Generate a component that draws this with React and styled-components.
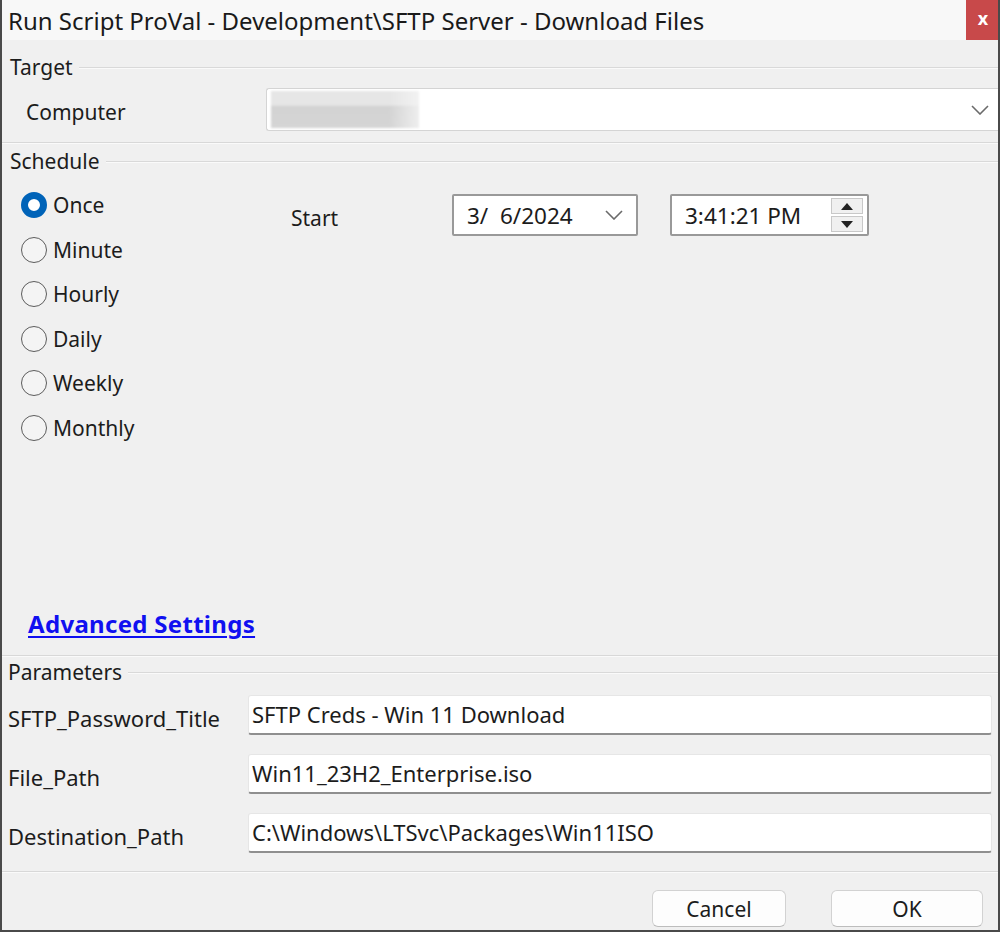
import React from 'react';
import styled, { createGlobalStyle } from 'styled-components';

const GlobalStyle = createGlobalStyle`
	html, body {
		margin: 0;
		padding: 0;
		background: #f0f0f0;
	}
	* {
		box-sizing: border-box;
	}
`;

const Window = styled.div`
	width: 1000px;
	height: 932px;
	display: flex;
	flex-direction: column;
	background: #f0f0f0;
	border-left: 2px solid #4a4a4a;
	border-right: 2px solid #4a4a4a;
	border-bottom: 2px solid #4a4a4a;
	font-family: "Noto Sans", "Open Sans", sans-serif;
	font-size: 21px;
	color: #1c1c1c;
	overflow: hidden;
`;

const TitleBar = styled.div`
	height: 40px;
	flex: none;
	display: flex;
	align-items: center;
	justify-content: space-between;
	background: #f8f8f8;
`;

const Title = styled.div`
	padding-left: 6px;
	font-size: 24px;
	color: #1a1a1a;
`;

const CloseButton = styled.div`
	width: 34px;
	height: 40px;
	margin-right: -2px;
	background: #c8494a;
	color: #fff;
	font-weight: bold;
	font-size: 18px;
	display: flex;
	align-items: center;
	justify-content: center;
	padding-bottom: 4px;
`;

const GroupHeader = styled.div`
	display: flex;
	align-items: center;
	height: 22px;
	margin-top: ${ ( { top } ) => top }px;
	padding-left: ${ ( { left } ) => left }px;
`;

const GroupLabel = styled.span`
	padding-right: 6px;
	line-height: 22px;
`;

const GroupLine = styled.div`
	flex: 1;
	height: 2px;
	border-top: 1px solid #d9d9d9;
	border-bottom: 1px solid #fafafa;
	margin-top: 2px;
`;

const Separator = styled.div`
	height: 2px;
	flex: none;
	margin-top: ${ ( { top } ) => top }px;
	border-top: 1px solid #d8d8d8;
	border-bottom: 1px solid #fafafa;
`;

const ComputerRow = styled.div`
	display: flex;
	align-items: center;
	height: 43px;
	margin-top: 10px;
	padding-left: 24px;
`;

const ComputerLabel = styled.div`
	width: 240px;
	padding-top: 4px;
`;

const Combo = styled.div`
	flex: 1;
	height: 43px;
	display: flex;
	align-items: center;
	background: #fff;
	border: 1px solid #d4d4d4;
	border-right: none;
	border-radius: 3px 0 0 3px;
	padding: 2px 0 2px 4px;
`;

const Blurred = styled.div`
	width: 148px;
	height: 37px;
	background:
		linear-gradient(90deg, rgba(255,255,255,0) 0%, rgba(255,255,255,0) 80%, rgba(245,245,245,0.8) 100%),
		linear-gradient(180deg, #e6e6e6 0%, #e6e6e6 38%, #d3d3d3 42%, #d5d5d5 100%);
	filter: blur(1px);
`;

const ComboFill = styled.div`
	flex: 1;
`;

const ChevronBox = styled.div`
	width: 36px;
	display: flex;
	align-items: center;
	justify-content: center;
`;

const ScheduleBody = styled.div`
	display: flex;
	height: 272px;
	margin-top: 11px;
	padding-left: 19px;
`;

const RadioColumn = styled.div`
	width: 270px;
	display: flex;
	flex-direction: column;
`;

const RadioRow = styled.div`
	height: 44.5px;
	display: flex;
	align-items: center;
	gap: 6px;
`;

const RadioCircle = styled.div`
	width: 26px;
	height: 26px;
	border-radius: 50%;
	flex: none;
	${ ( { checked } ) =>
		checked
			? 'background: #fff; border: 7px solid #0063b8;'
			: 'background: #f4f4f4; border: 1.5px solid #5c5c5c;' }
`;

const RadioLabel = styled.span`
	line-height: 26px;
`;

const StartArea = styled.div`
	display: flex;
	align-items: flex-start;
	padding-top: 11px;
`;

const StartLabel = styled.div`
	width: 161px;
	padding-top: 10px;
`;

const DateBox = styled.div`
	width: ${ ( { w } ) => w }px;
	height: 42px;
	margin-right: ${ ( { gap } ) => gap || 0 }px;
	display: flex;
	align-items: center;
	justify-content: space-between;
	background: #fff;
	border: 2px solid #999;
	border-radius: 2px;
	padding: 0 4px 0 13px;
	font-size: 22.5px;
`;

const Spinner = styled.div`
	display: flex;
	flex-direction: column;
	gap: 2px;
	width: 32px;
`;

const SpinButton = styled.div`
	height: 16px;
	background: #f0f0f0;
	border: 1px solid #c8c8c8;
	display: flex;
	align-items: center;
	justify-content: center;
`;

const LinkRow = styled.div`
	height: 60px;
	padding-left: 26px;
	display: flex;
	align-items: center;
`;

const AdvancedLink = styled.a`
	color: #1010f0;
	font-weight: bold;
	font-size: 24px;
	letter-spacing: 0.3px;
	text-decoration: underline;
	text-decoration-thickness: 2px;
	text-underline-offset: 3px;
	cursor: pointer;
`;

const ScheduleSpacer = styled.div`
	flex: 1;
`;

const ScheduleSection = styled.div`
	display: flex;
	flex-direction: column;
	height: 509px;
`;

const ParamList = styled.div`
	display: flex;
	flex-direction: column;
	gap: 19px;
	margin-top: 12px;
	padding: 0 6px;
	font-size: 22px;
`;

const ParamRow = styled.div`
	display: flex;
	align-items: center;
	height: 40px;
`;

const ParamLabel = styled.div`
	width: 240px;
	padding-top: 6px;
`;

const ParamInput = styled.div`
	flex: 1;
	height: 40px;
	background: #fff;
	border: 1px solid #e6e6e6;
	border-bottom: 2px solid #8f8f8f;
	border-radius: 3px;
	padding: 3px 3px 0;
	line-height: 30px;
	white-space: nowrap;
`;

const Footer = styled.div`
	display: flex;
	justify-content: flex-end;
	gap: 45px;
	margin-top: 17px;
	padding-right: 15px;
`;

const Button = styled.div`
	width: ${ ( { w } ) => w }px;
	height: 37px;
	display: flex;
	align-items: center;
	justify-content: center;
	background: #fdfdfd;
	border: 1px solid #d2d2d2;
	border-bottom-color: #bdbdbd;
	border-radius: 6px;
`;

function Chevron() {
	return (
		<svg width="18" height="10" viewBox="0 0 18 10">
			<polyline points="1,1 9,9 17,1" fill="none" stroke="#6a6a6a" strokeWidth="1.6" />
		</svg>
	);
}

function Triangle( { up } ) {
	return (
		<svg width="12" height="7" viewBox="0 0 12 7">
			<polygon points={ up ? '0,7 6,0 12,7' : '0,0 6,7 12,0' } fill="#222" />
		</svg>
	);
}

const frequencies = [ 'Once', 'Minute', 'Hourly', 'Daily', 'Weekly', 'Monthly' ];

const params = [
	{ label: 'SFTP_Password_Title', value: 'SFTP Creds - Win 11 Download' },
	{ label: 'File_Path', value: 'Win11_23H2_Enterprise.iso' },
	{ label: 'Destination_Path', value: 'C:\\Windows\\LTSvc\\Packages\\Win11ISO' },
];

export default function App() {
	return (
		<Window>
			<GlobalStyle />
			<TitleBar>
				<Title>Run Script ProVal - Development\SFTP Server - Download Files</Title>
				<CloseButton>x</CloseButton>
			</TitleBar>

			<GroupHeader top={ 16 } left={ 8 }>
				<GroupLabel>Target</GroupLabel>
				<GroupLine />
			</GroupHeader>
			<ComputerRow>
				<ComputerLabel>Computer</ComputerLabel>
				<Combo>
					<Blurred />
					<ComboFill />
					<ChevronBox>
						<Chevron />
					</ChevronBox>
				</Combo>
			</ComputerRow>
			<Separator top={ 11 } />

			<ScheduleSection>
				<GroupHeader top={ 6 } left={ 8 }>
					<GroupLabel>Schedule</GroupLabel>
					<GroupLine />
				</GroupHeader>
				<ScheduleBody>
					<RadioColumn>
						{ frequencies.map( ( f, i ) => (
							<RadioRow key={ f }>
								<RadioCircle checked={ i === 0 } />
								<RadioLabel>{ f }</RadioLabel>
							</RadioRow>
						) ) }
					</RadioColumn>
					<StartArea>
						<StartLabel>Start</StartLabel>
						<DateBox w={ 186 } gap={ 32 }>
							<span>3/&nbsp;&nbsp;6/2024</span>
							<ChevronBox>
								<Chevron />
							</ChevronBox>
						</DateBox>
						<DateBox w={ 199 }>
							<span>3:41:21 PM</span>
							<Spinner>
								<SpinButton>
									<Triangle up />
								</SpinButton>
								<SpinButton>
									<Triangle />
								</SpinButton>
							</Spinner>
						</DateBox>
					</StartArea>
				</ScheduleBody>
				<ScheduleSpacer />
				<LinkRow>
					<AdvancedLink>Advanced Settings</AdvancedLink>
				</LinkRow>
			</ScheduleSection>
			<Separator top={ 2 } />

			<GroupHeader top={ 4 } left={ 6 }>
				<GroupLabel>Parameters</GroupLabel>
				<GroupLine />
			</GroupHeader>
			<ParamList>
				{ params.map( ( p ) => (
					<ParamRow key={ p.label }>
						<ParamLabel>{ p.label }</ParamLabel>
						<ParamInput>{ p.value }</ParamInput>
					</ParamRow>
				) ) }
			</ParamList>
			<Separator top={ 18 } />
			<Footer>
				<Button w={ 134 }>Cancel</Button>
				<Button w={ 152 }>OK</Button>
			</Footer>
		</Window>
	);
}
